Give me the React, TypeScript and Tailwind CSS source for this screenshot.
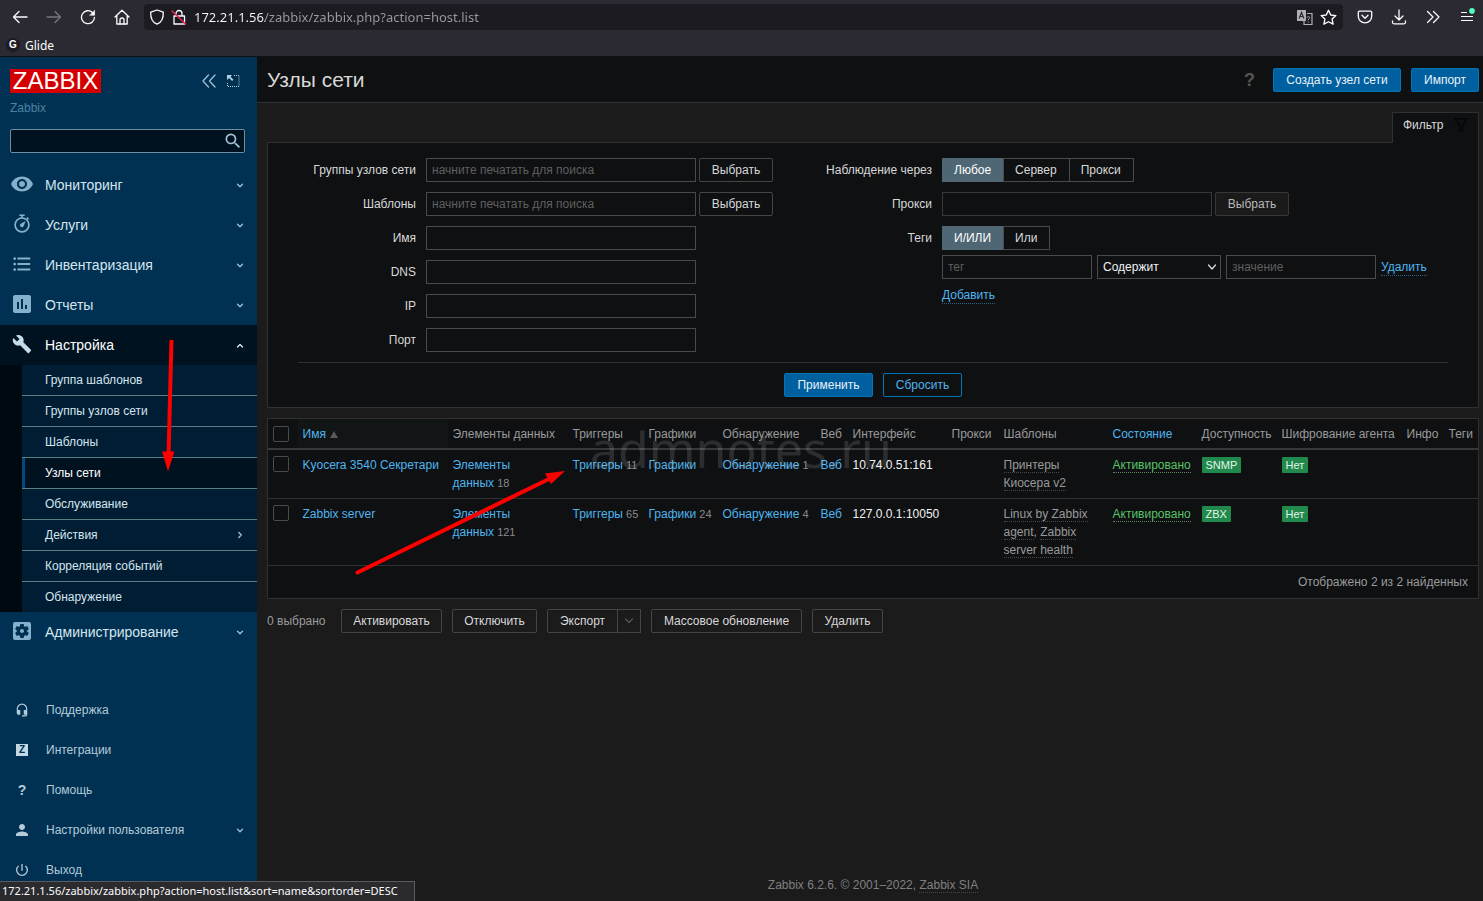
import { type ReactNode } from 'react';
import { clsx } from 'clsx';
import {
  MdAssessment,
  MdBuild,
  MdFormatListBulleted,
  MdHeadsetMic,
  MdPerson,
  MdPowerSettingsNew,
  MdRemoveRedEye,
  MdSearch,
  MdSettingsApplications,
} from 'react-icons/md';

const SUBMENU = [
  'Группа шаблонов',
  'Группы узлов сети',
  'Шаблоны',
  'Узлы сети',
  'Обслуживание',
  'Действия',
  'Корреляция событий',
  'Обнаружение',
];

interface Host {
  name: string;
  items: number;
  triggers: number;
  graphs?: number;
  discovery: number;
  iface: string;
  templates: string[];
  availability: string;
}

const HOSTS: Host[] = [
  {
    name: 'Kyocera 3540 Секретари',
    items: 18,
    triggers: 11,
    discovery: 1,
    iface: '10.74.0.51:161',
    templates: ['Принтеры Киосера v2'],
    availability: 'SNMP',
  },
  {
    name: 'Zabbix server',
    items: 121,
    triggers: 65,
    graphs: 24,
    discovery: 4,
    iface: '127.0.0.1:10050',
    templates: ['Linux by Zabbix agent', 'Zabbix server health'],
    availability: 'ZBX',
  },
];

const Stroke = ({ children, className = 'size-4', box = '0 0 16 16' }: { children: ReactNode; className?: string; box?: string }) => (
  <svg viewBox={box} className={className} fill="none" stroke="currentColor" strokeWidth="1.3" strokeLinecap="round" strokeLinejoin="round" aria-hidden="true">
    {children}
  </svg>
);

const Chevron = ({ dir = 'down' }: { dir?: 'down' | 'up' | 'right' }) => (
  <Stroke className={clsx('size-2 shrink-0', dir === 'up' ? 'text-[#e0edf5]' : 'text-[#9fc3d8]')} box="0 0 8 8">
    {dir === 'down' && <path d="M1.5 3.3 4 5.8l2.5-2.5" />}
    {dir === 'up' && <path d="M1.5 6 4 3.500l2.500 2.500" />}
    {dir === 'right' && <path d="M2.8 1.5 5.3 4 2.8 6.5" />}
  </Stroke>
);

const StopwatchIcon = () => (
  <svg viewBox="0 0 20 20" className="size-5" aria-hidden="true">
    <circle cx="10" cy="10.9" r="6.9" fill="none" stroke="currentColor" strokeWidth="1.7" />
    <path d="M7.3 .5h5.400v1.600H7.300zM9.200 1.500h1.600v3H9.200zM15.400 3.100l1.700 1.600-1.200 1.200-1.600-1.600z" fill="currentColor" />
    <path d="M13.6 7.1 11.7 12a1.9 1.9 0 1 1-2.9-2.300z" fill="currentColor" />
  </svg>
);

const BrowserBar = () => (
  <header className="bg-[#2b2a33] font-['Noto_Sans','Open_Sans',sans-serif] text-[#fbfbfe]">
    <div className="flex h-[34px] items-center pl-3 pr-2">
      <nav className="flex items-center gap-[18px]">
        <button aria-label="Назад">
          <Stroke><path d="M15 8H1.5M7 2.5 1.5 8 7 13.5" /></Stroke>
        </button>
        <button aria-label="Вперёд" className="text-[#77767e]">
          <Stroke><path d="M1 8h13.5M9 2.5 14.5 8 9 13.5" /></Stroke>
        </button>
        <button aria-label="Обновить">
          <Stroke>
            <path d="M14.5 8.3A6.5 6.5 0 1 1 12.5 3.5" />
            <path d="M14.6 1.6v4.6H10z" fill="currentColor" strokeWidth="0.6" />
          </Stroke>
        </button>
        <button aria-label="Домой">
          <Stroke>
            <path d="M1 8 8 1.2 15 8M2.8 6.8V15h10.4V6.8" />
            <path d="M6 15v-4a2 2 0 0 1 4 0v4" />
          </Stroke>
        </button>
      </nav>
      <div className="ml-[14px] flex h-[26px] min-w-0 flex-1 items-center rounded-sm bg-[#1c1b22] pl-[5px] pr-[6px]">
        <Stroke>
          <path d="M8 1 14.3 3.2C14.5 9.2 12.6 13.4 8 15.2 3.4 13.4 1.5 9.2 1.7 3.2z" />
        </Stroke>
        <Stroke className="ml-[6px] size-4">
          <path d="M5 7V4.5a3 3 0 0 1 6 0V7M3 7h10.5v8H3z" />
          <path d="M1 2 14.5 15" stroke="#e22850" strokeWidth="1.6" />
        </Stroke>
        {/* host part is bright, the path is dimmed */}
        <input
          aria-label="Адрес"
          className="ml-[7px] h-full min-w-0 flex-1 bg-[linear-gradient(90deg,#fbfbfe_71px,#9b9aa3_71px)] bg-clip-text text-[13px] text-transparent outline-none"
          defaultValue="172.21.1.56/zabbix/zabbix.php?action=host.list"
        />
        <button aria-label="Перевести" className="text-[#b0afb6]">
          <svg viewBox="0 0 17 17" className="size-[17px]" aria-hidden="true">
            <path d="M1 1h9v11H1z" fill="currentColor" />
            <path d="M3.2 9.5 5.5 3.5l2.3 6M4 7.5h3" fill="none" stroke="#2b2a33" strokeWidth="1.2" />
            <path d="M11 4.5h5v11H8V12" fill="none" stroke="currentColor" strokeWidth="1.2" />
            <path d="M11 8.5c.3-1.4 3-1.2 2.6.4-.2.9-1.4 1-1.4 2.2M12.2 12.5v1" fill="none" stroke="currentColor" strokeWidth="1" />
          </svg>
        </button>
        <button aria-label="Добавить в закладки" className="ml-[7px]">
          <Stroke className="size-[17px]">
            <path d="m8 1.2 2.1 4.4 4.8.6-3.5 3.3.9 4.8L8 12l-4.3 2.3.9-4.8L1.1 6.2l4.8-.6z" />
          </Stroke>
        </button>
      </div>
      <div className="ml-[14px] flex items-center gap-[18px]">
        <button aria-label="Pocket">
          <Stroke>
            <path d="M2.5 2.2h11a1.2 1.2 0 0 1 1.2 1.2v3.8a6.7 6.7 0 0 1-13.4 0V3.4a1.2 1.2 0 0 1 1.2-1.2z" />
            <path d="M5 6.3 8 9.2l3-2.9" />
          </Stroke>
        </button>
        <button aria-label="Загрузки">
          <Stroke><path d="M8 1v9.5M4 7l4 4 4-4M1.5 12v1.3a1.5 1.5 0 0 0 1.5 1.5h10a1.5 1.5 0 0 0 1.5-1.5V12" /></Stroke>
        </button>
        <button aria-label="Другие инструменты">
          <Stroke><path d="M2.5 2.5 8 8l-5.5 5.5M8.5 2.5 14 8l-5.5 5.5" /></Stroke>
        </button>
        <button aria-label="Меню">
          <svg viewBox="0 0 16 18" className="h-[18px] w-4" aria-hidden="true">
            <path d="M2 4.500h6M2 8.500h12M2 12.500h12" stroke="currentColor" strokeWidth="1.200" />
            <circle cx="13" cy="2.900" r="2.800" fill="#54ffbd" />
          </svg>
        </button>
      </div>
    </div>
    <div className="flex h-[22px] items-center gap-[5px] pl-[6px] text-xs">
      <span className="flex size-[14px] items-center justify-center rounded-full bg-[#1c1b22] font-['Liberation_Sans',sans-serif] text-[10px] font-bold">G</span>
      <a href="#glide" className="pt-px">Glide</a>
    </div>
  </header>
);

interface MenuItemProps {
  icon: ReactNode;
  label: string;
  active?: boolean;
}

const MenuItem = ({ icon, label, active }: MenuItemProps) => (
  <a
    href="#menu"
    className={clsx(
      'flex h-10 items-center pl-[11px] pr-[13px] text-sm',
      active ? 'bg-[#00121f] text-white' : 'text-[#d5e5ef]',
    )}
  >
    <span className={clsx('flex w-[22px] justify-center pb-[2px]', active ? 'text-[#c5dcea]' : 'text-[#84b0cc]')}>{icon}</span>
    <span className="ml-3 flex-1">{label}</span>
    <Chevron dir={active ? 'up' : 'down'} />
  </a>
);

const FootItem = ({ icon, label, expandable }: { icon: ReactNode; label: string; expandable?: boolean }) => (
  <a href="#user" className="flex h-10 items-center pl-[15px] pr-[13px] text-xs text-[#b4cbd9]">
    <span className="flex w-[14px] justify-center">{icon}</span>
    <span className="ml-[17px] flex-1">{label}</span>
    {expandable && <Chevron />}
  </a>
);

const Sidebar = () => (
  <aside className="flex w-[257px] shrink-0 flex-col bg-[#003152]">
    <div className="flex items-center pl-[10px] pr-[17px] pt-3">
      <a href="#home" className="flex h-6 w-[91px] items-center justify-center bg-[#d40000] font-['Liberation_Sans',sans-serif] text-2xl leading-6 text-white">
        ZABBIX
      </a>
      <button aria-label="Свернуть" className="ml-auto text-[#9fc3d8]">
        <Stroke><path d="M7.5 2 2 8l5.5 6M14 2 8.5 8l5.5 6" /></Stroke>
      </button>
      <button aria-label="Скрыть меню" className="ml-[9px] text-[#b5d0e0]">
        <svg viewBox="0 0 14 14" className="size-[14px]" aria-hidden="true">
          <path d="M8 1.5h5v11H1.5V8" fill="none" stroke="currentColor" strokeDasharray="1 1" />
          <path d="M1 1h5L4.5 2.7l3 3-1.4 1.4-3-3L1 6z" fill="currentColor" />
        </svg>
      </button>
    </div>
    <p className="mt-[6px] pl-[10px] text-xs leading-[18px] text-[#4f82a0]">Zabbix</p>
    <div className="ml-[10px] mr-3 mt-3 flex h-6 items-center rounded-xs border border-[#6f8d9e] bg-[#00121f] pr-px">
      <input aria-label="Поиск" className="h-full min-w-0 flex-1 bg-transparent px-1 text-xs text-white outline-none" />
      <button aria-label="Найти" className="text-[#9fc3d8]">
        <MdSearch className="size-5" />
      </button>
    </div>
    <nav className="mt-3">
      <MenuItem icon={<MdRemoveRedEye className="size-6 shrink-0" />} label="Мониторинг" />
      <MenuItem icon={<StopwatchIcon />} label="Услуги" />
      <MenuItem icon={<MdFormatListBulleted className="size-[22px]" />} label="Инвентаризация" />
      <MenuItem icon={<MdAssessment className="size-6 shrink-0" />} label="Отчеты" />
      <MenuItem icon={<MdBuild className="size-5" />} label="Настройка" active />
      <ul className="border-l-[22px] border-[#000810] bg-[#001d33] text-xs text-[#d5e5ef]">
        {SUBMENU.map((label, i) => (
          <li key={label} className={clsx(i < SUBMENU.length - 1 && 'border-b border-[#567f83]')}>
            <a
              href="#section"
              className={clsx(
                'flex h-[30px] items-center border-l-[3px] pl-5 pr-[13px]',
                label === 'Узлы сети' ? 'border-[#004a80] bg-[#00121f] text-white' : 'border-transparent',
              )}
            >
              <span className="flex-1">{label}</span>
              {label === 'Действия' && <Chevron dir="right" />}
            </a>
          </li>
        ))}
      </ul>
      <MenuItem icon={<MdSettingsApplications className="size-6 shrink-0" />} label="Администрирование" />
    </nav>
    <nav className="mt-auto pb-[11px]">
      <FootItem icon={<MdHeadsetMic className="size-[14px]" />} label="Поддержка" />
      <FootItem
        icon={<span className="flex size-3 items-center justify-center bg-[#c2d9e5] text-[10px] font-bold leading-3 text-[#003152]">Z</span>}
        label="Интеграции"
      />
      <FootItem icon={<span className="text-sm font-bold">?</span>} label="Помощь" />
      <FootItem icon={<MdPerson className="size-[18px] shrink-0" />} label="Настройки пользователя" expandable />
      <FootItem icon={<MdPowerSettingsNew className="size-4 shrink-0" />} label="Выход" />
    </nav>
  </aside>
);

const BTN = 'h-6 shrink-0 rounded-xs border text-xs whitespace-nowrap';
const BTN_PRIMARY = 'border-[#0275b8] bg-[#005f9f] text-[#e8f3fa]';
const BTN_GRAY = 'border-[#454545] text-[#d8d8d8]';
const INPUT = 'h-6 min-w-0 border border-[#4a4a4a] bg-transparent px-[5px] text-xs text-[#f2f2f2] placeholder:text-[#5f5f5f] outline-none';
const LINK = 'text-[#4fb4ee]';

const FilterRow = ({ id, label, children }: { id?: string; label: string; children: ReactNode }) => (
  <div className="flex gap-[10px]">
    <label htmlFor={id} className="h-6 w-[118px] shrink-0 text-right leading-6">{label}</label>
    {children}
  </div>
);

const Segmented = ({ name, options }: { name: string; options: string[] }) => (
  <div className="flex" role="radiogroup" aria-label={name}>
    {options.map((option, i) => (
      <label
        key={option}
        className="-ml-px flex h-6 cursor-pointer items-center border border-[#4a4a4a] pl-[11px] pr-3 first:ml-0 has-checked:border-[#4f6774] has-checked:bg-[#4f6774] has-checked:text-white"
      >
        <input type="radio" name={name} defaultChecked={i === 0} className="sr-only" />
        {option}
      </label>
    ))}
  </div>
);

const Filter = () => (
  <section className="mt-[9px]">
    <div className="flex justify-end">
      <button className="-mb-px flex h-[31px] w-[87px] items-center justify-between border border-b-0 border-[#303030] bg-[#0e1012] px-[10px] pb-[6px] text-xs text-[#d8d8d8]">
        Фильтр
        <svg viewBox="0 0 14 14" className="size-[14px]" aria-hidden="true">
          <path d="M1 1h12L8.5 7v6h-3V7z" fill="none" stroke="#050607" strokeWidth="1.6" />
        </svg>
      </button>
    </div>
    <form className="border border-[#303030] bg-[#0e1012] px-[30px] pb-[10px] pt-[15px]" onSubmit={(e) => e.preventDefault()}>
      <div className="grid grid-cols-[516fr_634fr] border-b border-[#303030] pb-[10px]">
        <div className="flex flex-col gap-[10px]">
          {['Группы узлов сети', 'Шаблоны'].map((label) => (
            <FilterRow key={label} id={label} label={label}>
              <div className="flex gap-[3px]">
                <input id={label} placeholder="начните печатать для поиска" className={clsx(INPUT, 'w-[270px]')} />
                <button type="button" className={clsx(BTN, BTN_GRAY, 'w-[74px]')}>Выбрать</button>
              </div>
            </FilterRow>
          ))}
          {['Имя', 'DNS', 'IP', 'Порт'].map((label) => (
            <FilterRow key={label} id={label} label={label}>
              <input id={label} className={clsx(INPUT, 'w-[270px]')} />
            </FilterRow>
          ))}
        </div>
        <div className="flex flex-col gap-[10px]">
          <FilterRow label="Наблюдение через">
            <Segmented name="monitored-by" options={['Любое', 'Сервер', 'Прокси']} />
          </FilterRow>
          <FilterRow id="proxy" label="Прокси">
            <div className="flex gap-[3px]">
              <input id="proxy" disabled className={clsx(INPUT, 'w-[270px] border-[#383838] bg-[#1a1a1b]')} />
              <button type="button" disabled className={clsx(BTN, 'w-[74px] border-[#383838] bg-[#1a1a1b] text-[#b8b8b8]')}>Выбрать</button>
            </div>
          </FilterRow>
          <FilterRow label="Теги">
            <div>
              <Segmented name="tags" options={['И/ИЛИ', 'Или']} />
              <div className="mt-[5px] flex items-center gap-[5px]">
                <input aria-label="Тег" placeholder="тег" className={clsx(INPUT, 'w-[150px]')} />
                <div className="relative flex">
                  <select aria-label="Условие" className={clsx(INPUT, 'w-[124px] appearance-none px-1')}>
                    <option>Содержит</option>
                  </select>
                  <Stroke className="pointer-events-none absolute right-1 top-[7px] size-[10px]" box="0 0 10 10">
                    <path d="M1.5 3 5 7l3.5-4" />
                  </Stroke>
                </div>
                <input aria-label="Значение" placeholder="значение" className={clsx(INPUT, 'w-[150px]')} />
                <button type="button" className={clsx(LINK, 'border-b border-dotted border-[#2a6285]')}>Удалить</button>
              </div>
              <button type="button" className={clsx(LINK, 'mt-2 border-b border-dotted border-[#2a6285]')}>Добавить</button>
            </div>
          </FilterRow>
        </div>
      </div>
      <div className="flex justify-center gap-[10px] pt-[10px]">
        <button className={clsx(BTN, BTN_PRIMARY, 'w-[89px]')}>Применить</button>
        <button type="reset" className={clsx(BTN, LINK, 'w-[79px] border-[#0275b8]')}>Сбросить</button>
      </div>
    </form>
  </section>
);

const Check = ({ label }: { label: string }) => (
  <input type="checkbox" aria-label={label} className="block size-4 appearance-none rounded-xs border border-[#4a4a4a] bg-[#0e1012] checked:bg-[#4f6774]" />
);

const CountLink = ({ label, count }: { label: string; count?: number }) => (
  <>
    <a href="#list" className={LINK}>{label}</a>
    {count !== undefined && <span className="text-[11px] text-[#8a8a8a]"> {count}</span>}
  </>
);

const Badge = ({ children }: { children: ReactNode }) => (
  <span className="inline-block rounded-[1px] bg-[#21894b] px-1 text-[11px] leading-4 text-[#e4f5ea]">{children}</span>
);

const HostTable = () => (
  <table className="mt-[10px] w-full table-fixed border-collapse border border-[#303030] bg-[#0e1012] text-left leading-[18px] [&_td]:px-[5px] [&_td]:py-[6px] [&_td]:align-top [&_th]:whitespace-nowrap [&_th]:px-[5px] [&_th]:pb-[5px] [&_th]:pt-[6px] [&_th]:font-normal">
    <colgroup>
      <col className="w-[30px]" />
      <col className="w-[150px]" />
      <col className="w-[120px]" />
      <col className="w-[76px]" />
      <col className="w-[74px]" />
      <col className="w-[98px]" />
      <col className="w-[32px]" />
      <col className="w-[99px]" />
      <col className="w-[52px]" />
      <col className="w-[109px]" />
      <col className="w-[89px]" />
      <col className="w-[80px]" />
      <col className="w-[125px]" />
      <col className="w-[42px]" />
      <col className="w-[35px]" />
    </colgroup>
    <thead>
      <tr className="border-b-2 border-[#383838] text-[#9a9a9a]">
        <th><Check label="Выбрать все" /></th>
        <th className="bg-[#111515]">
          <a href="#sort" className={LINK}>Имя</a>
          <svg viewBox="0 0 8 7" className="ml-1 inline h-[7px] w-2" aria-hidden="true">
            <path d="M4 0 8 7H0z" fill="#5a5a5a" />
          </svg>
        </th>
        <th>Элементы данных</th>
        <th>Триггеры</th>
        <th>Графики</th>
        <th>Обнаружение</th>
        <th>Веб</th>
        <th>Интерфейс</th>
        <th>Прокси</th>
        <th>Шаблоны</th>
        <th><a href="#sort-status" className={LINK}>Состояние</a></th>
        <th>Доступность</th>
        <th>Шифрование агента</th>
        <th>Инфо</th>
        <th>Теги</th>
      </tr>
    </thead>
    <tbody>
      {HOSTS.map((host) => (
        <tr key={host.name} className="border-b border-[#303030]">
          <td><Check label={host.name} /></td>
          <td className="whitespace-nowrap"><a href="#host" className={LINK}>{host.name}</a></td>
          <td>
            <a href="#items" className={LINK}>Элементы<br />данных</a>
            <span className="text-[11px] text-[#8a8a8a]"> {host.items}</span>
          </td>
          <td className="whitespace-nowrap"><CountLink label="Триггеры" count={host.triggers} /></td>
          <td className="whitespace-nowrap"><CountLink label="Графики" count={host.graphs} /></td>
          <td className="whitespace-nowrap"><CountLink label="Обнаружение" count={host.discovery} /></td>
          <td><CountLink label="Веб" /></td>
          <td className="text-[#f2f2f2]">{host.iface}</td>
          <td />
          <td className="text-[#9a9a9a]">
            {host.templates.map((template, i) => (
              <span key={template}>
                {i > 0 && ', '}
                <a href="#template" className="border-b border-dotted border-[#484848]">{template}</a>
              </span>
            ))}
          </td>
          <td><a href="#status" className="border-b border-dotted border-[#5a8a60] text-[#59c268]">Активировано</a></td>
          <td><Badge>{host.availability}</Badge></td>
          <td><Badge>Нет</Badge></td>
          <td />
          <td />
        </tr>
      ))}
    </tbody>
    <tfoot>
      <tr>
        <td colSpan={15} className="text-right text-[#9a9a9a]">
          <span className="mr-[5px] leading-5">Отображено 2 из 2 найденных</span>
        </td>
      </tr>
    </tfoot>
  </table>
);

const Actions = () => (
  <div className="mt-[10px] flex items-center gap-[10px]">
    <span className="w-16 text-[#9a9a9a]">0 выбрано</span>
    <button className={clsx(BTN, BTN_GRAY, 'w-[101px]')}>Активировать</button>
    <button className={clsx(BTN, BTN_GRAY, 'w-[85px]')}>Отключить</button>
    <div className="flex">
      <button className={clsx(BTN, BTN_GRAY, 'w-[71px]')}>Экспорт</button>
      <button aria-label="Формат экспорта" className="-ml-px flex h-6 w-6 items-center justify-center border border-[#454545] text-[#555]">
        <Stroke className="size-[10px]" box="0 0 10 10"><path d="M1.5 3 5 6.5 8.5 3" /></Stroke>
      </button>
    </div>
    <button className={clsx(BTN, BTN_GRAY, 'w-[151px]')}>Массовое обновление</button>
    <button className={clsx(BTN, BTN_GRAY, 'w-[71px]')}>Удалить</button>
  </div>
);

// Red pointer arrows drawn over the page
const Arrows = () => (
  <svg className="pointer-events-none absolute left-0 top-0" width="600" height="600" fill="#fe0000" stroke="#fe0000" aria-hidden="true">
    <path d="M171.5 340 168.500 456" strokeWidth="4" />
    <path d="M162 451.500h12.500L168 471.500z" stroke="none" />
    <path d="M357.500 572.500 552 477.500" strokeWidth="4" strokeLinecap="round" />
    <path d="M565 471 545 473.500 551 484z" stroke="none" />
  </svg>
);

const App = () => (
  <div className="relative flex min-h-screen flex-col overflow-x-hidden bg-[#1b1b1c] font-['Liberation_Sans',Arial,sans-serif] text-xs text-[#d8d8d8]">
    <BrowserBar />
    <div className="flex flex-1 border-t border-[#0e1012]">
      <Sidebar />
      <main className="flex min-w-0 flex-1 flex-col">
        <div className="flex h-[46px] items-center gap-[10px] border-b border-[#303030] bg-[#0e1012] pl-[10px] pr-1">
          <h1 className="flex-1 text-[21px]">Узлы сети</h1>
          <button aria-label="Справка" className="mr-2 text-lg font-bold text-[#555]">?</button>
          <button className={clsx(BTN, BTN_PRIMARY, 'w-32')}>Создать узел сети</button>
          <button className={clsx(BTN, BTN_PRIMARY, 'w-[68px]')}>Импорт</button>
        </div>
        <div className="flex flex-1 flex-col pl-[10px] pr-1">
          <Filter />
          <HostTable />
          <Actions />
          <footer className="mt-auto pb-2 text-center text-[#808080]">
            Zabbix 6.2.6. © 2001–2022, <a href="#sia" className="border-b border-dotted border-[#484848]">Zabbix SIA</a>
          </footer>
        </div>
      </main>
    </div>
    <div className="pointer-events-none absolute left-[590px] top-[415px] font-['Noto_Sans',sans-serif] text-[50px] leading-[68px] text-white/12">
      admnotes.ru
    </div>
    <Arrows />
    <div className="absolute bottom-0 left-0 flex h-5 w-[415px] items-center border-r border-t border-[#5a5a60] bg-[#2b2b2e] pl-[2px] font-['Noto_Sans','Open_Sans',sans-serif] text-[11px] whitespace-nowrap text-[#fbfbfe]">
      172.21.1.56/zabbix/zabbix.php?action=host.list&amp;sort=name&amp;sortorder=DESC
    </div>
  </div>
);

export default App;
